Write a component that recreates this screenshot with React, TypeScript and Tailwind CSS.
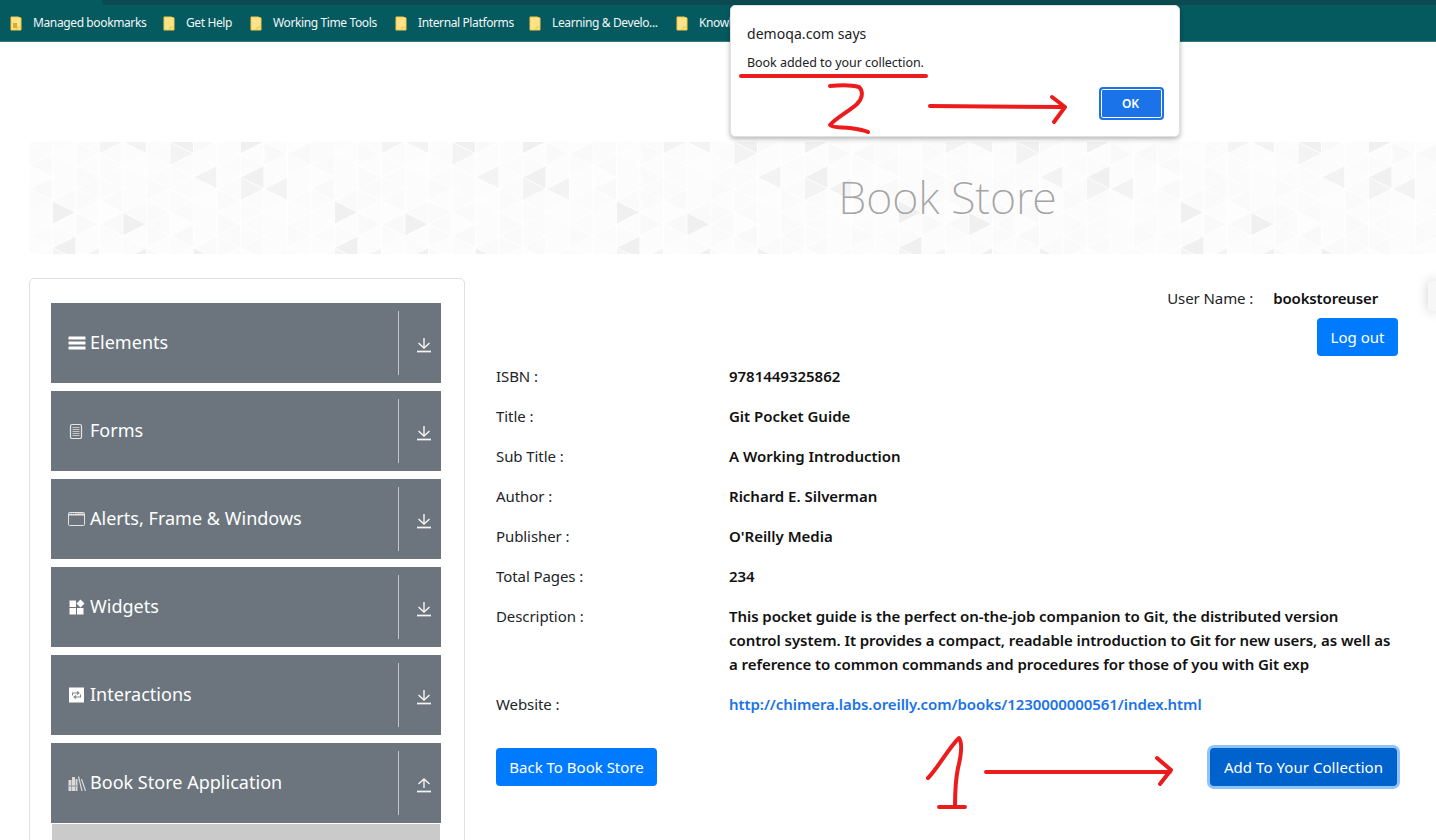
const sans = "font-['Noto_Sans','Open_Sans',sans-serif]";

function Folder({ managed }: { managed?: boolean }) {
  return (
    <svg width="14" height="15" viewBox="0 0 14 15" className="shrink-0">
      <path d="M2 1h7l3 1v12H2z" fill="#ffe38a" stroke="#f5c842" strokeWidth="1" />
      <path d="M8 14v-3h4" fill="none" stroke="#f5c842" strokeWidth="1" />
      {managed && <rect x="4" y="7" width="4" height="5" fill="#d9ae2e" />}
    </svg>
  );
}

function Banner() {
  // triangle lattice of the header background
  const shades = ["#fbfbfb", "#fcfcfc", "#fafafa", "#fcfcfc", "#f3f3f3", "#fbfbfb", "#fafafa", "#fcfcfc", "#fbfbfb", "#fdfdfd", "#fafafa", "#fcfcfc", "#f0f0f0", "#fbfbfb", "#fcfcfc", "#f9f9f9", "#fcfcfc"];
  const tris: { p: string; c: string }[] = [];
  const w = 23.5;
  const h = 23.5;
  for (let col = 0; col < 60; col++) {
    for (let row = -1; row < 6; row++) {
      const x = col * w;
      const y = row * h + (col % 2 ? h / 2 : 0);
      const seed = (col % 12) * 7 + (row + 1) * 13;
      tris.push({ p: `${x},${y} ${x + w},${y + h / 2} ${x},${y + h}`, c: shades[seed % shades.length] });
      tris.push({ p: `${x + w},${y + h / 2} ${x},${y + h} ${x + w},${y + h + h / 2}`, c: shades[(seed * 3 + 5) % shades.length] });
    }
  }
  return (
    <svg className="absolute inset-0 w-full h-full" preserveAspectRatio="none">
      {tris.map((t, i) => (
        <polygon key={i} points={t.p} fill={t.c} stroke="#ffffff" strokeWidth="0.7" />
      ))}
    </svg>
  );
}

function ArrowIcon({ up }: { up?: boolean }) {
  return (
    <svg width="16" height="16" viewBox="0 0 16 16" fill="none" stroke="#f5f5f5" strokeWidth="1.4">
      {up ? <path d="M8 11V2M2.5 7L8 2l5.5 5" /> : <path d="M8 1v10M2.5 6L8 11l5.5-5" />}
      <path d="M1 14.5h14" strokeWidth="1.7" />
    </svg>
  );
}

function MenuIcon({ name }: { name: string }) {
  if (name === "bars")
    return (
      <svg width="18" height="16" viewBox="0 0 18 16" fill="#ffffff">
        <rect x="0.5" y="1.5" width="17" height="3" rx="0.5" />
        <rect x="0.5" y="6.5" width="17" height="3" rx="0.5" />
        <rect x="0.5" y="11.5" width="17" height="3" rx="0.5" />
      </svg>
    );
  if (name === "form")
    return (
      <svg width="18" height="16" viewBox="0 0 18 16" fill="none" stroke="#e4e4e4">
        <rect x="2.5" y="1.5" width="11" height="14" rx="1.5" strokeWidth="1.2" />
        <path d="M4.5 4.5h7M4.5 6.5h7M4.5 8.5h7M4.5 10.5h7M4.5 12.5h7" stroke="#c4c7ca" />
      </svg>
    );
  if (name === "window")
    return (
      <svg width="18" height="16" viewBox="0 0 18 16" fill="none" stroke="#e4e4e4">
        <rect x="0.5" y="1.5" width="16" height="13" rx="1" />
        <path d="M1 3.5h15" strokeWidth="2" />
        <path d="M2 2.5h1M4 2.5h1M6 2.5h1" stroke="#6c757d" />
      </svg>
    );
  if (name === "widgets")
    return (
      <svg width="18" height="16" viewBox="0 0 18 16" fill="#ffffff">
        <rect x="1.5" y="1.5" width="6.5" height="6.5" />
        <path d="M12.5 0.5l4 4-4 4-4-4z" />
        <rect x="1.5" y="9" width="6.5" height="6.5" />
        <rect x="9" y="9" width="6.5" height="6.5" />
      </svg>
    );
  if (name === "swap")
    return (
      <svg width="18" height="16" viewBox="0 0 18 16">
        <rect x="1" y="0.5" width="15" height="15" fill="#ffffff" />
        <path d="M4.5 8.5V6h6M9 4.3l2 1.7-2 1.7M12.5 7.5V10h-6M8 11.7L6 10l2-1.7" fill="none" stroke="#80858b" strokeWidth="1.1" />
      </svg>
    );
  return (
    <svg width="18" height="16" viewBox="0 0 18 16">
      <path d="M0.5 5h3v11h-3zM4 2h3v14H4zM7.5 4h2v12h-2z" fill="#dadada" />
      <path d="M10.5 1.5l3.5 14.5M13.5 4l4 12" stroke="#dadada" strokeWidth="1.2" fill="none" />
      <path d="M1 11h8" stroke="#8a8f95" />
    </svg>
  );
}

const menu = [
  { label: "Elements", icon: "bars" },
  { label: "Forms", icon: "form" },
  { label: "Alerts, Frame & Windows", icon: "window" },
  { label: "Widgets", icon: "widgets" },
  { label: "Interactions", icon: "swap" },
  { label: "Book Store Application", icon: "books", open: true },
];

const details = [
  { label: "ISBN :", value: "9781449325862" },
  { label: "Title :", value: "Git Pocket Guide" },
  { label: "Sub Title :", value: "A Working Introduction" },
  { label: "Author :", value: "Richard E. Silverman" },
  { label: "Publisher :", value: "O'Reilly Media" },
  { label: "Total Pages :", value: "234" },
];

const bookmarks = [
  { label: "Managed bookmarks", managed: true, w: "w-[153px]" },
  { label: "Get Help", w: "w-[87px]" },
  { label: "Working Time Tools", w: "w-[145px]" },
  { label: "Internal Platforms", w: "w-[134px]" },
  { label: "Learning & Develo...", w: "w-[147px]" },
  { label: "Knowledge", w: "w-[100px]" },
];

export default function App() {
  return (
    <div className={`relative w-[1436px] h-[840px] overflow-hidden bg-white text-[#212529] ${sans}`}>
      {/* browser chrome */}
      <div className="h-[42px] bg-[#055a60] border-b border-[#2e7a7f] relative">
        <div className="absolute left-[102px] right-0 top-0 h-[5px] bg-[#0c4a52] rounded-bl-lg" />
        <div className="flex items-center pl-[9px] pt-[15px] text-[12px] leading-4 text-[#f2f7f7]">
          {bookmarks.map((b) => (
            <div key={b.label} className={`flex items-center gap-[10px] shrink-0 whitespace-nowrap tracking-[-0.38px] ${b.w}`}>
              <Folder managed={b.managed} />
              <span>{b.label}</span>
            </div>
          ))}
        </div>
      </div>

      <div className="pl-[29px] pt-[100px]">
        <div className="relative h-[112px] flex items-center justify-center bg-[#fbfbfb] pl-[430px]">
          <Banner />
          <h1 className="relative text-[45px] font-extralight text-[#a4a4a4] leading-none pb-[4px] tracking-[-0.1px]">Book Store</h1>
        </div>

        <div className="flex mt-[24px]">
          <aside className="w-[436px] shrink-0 h-[600px] border border-[#dfdfdf] rounded-[5px] pt-[24px] pl-[21px] pr-[23px]">
            <div className="flex flex-col gap-[8px]">
              {menu.map((m) => (
                <div key={m.label} className="h-[80px] bg-[#6c757d] flex items-center text-white">
                  <div className="flex-1 flex items-center pl-[17px] gap-[4px] pb-[1px]">
                    <MenuIcon name={m.icon} />
                    <span className="text-[18px] leading-6 tracking-[0.02px] relative top-[-1px]">{m.label}</span>
                  </div>
                  <div className="h-[64px] w-px bg-[#c3c6c9]" />
                  <div className="w-[42px] flex justify-center pl-[8px] pt-[3px]">
                    <ArrowIcon up={m.open} />
                  </div>
                </div>
              ))}
            </div>
            <div className="h-[40px] mx-[1px] mt-[1px] bg-[#cacaca]" />
          </aside>

          <main className="flex-1 pl-[31px] pr-[38px] text-[15px] leading-6">
            <div className="flex justify-end pt-[8px] pr-[20px] tracking-[-0.08px]">
              <span>User Name :</span>
              <span className="ml-[20px] font-semibold text-[#111] tracking-[-0.15px]">bookstoreuser</span>
            </div>
            <div className="flex justify-end mt-[8px]">
              <button className="h-[38px] w-[81px] rounded-[4px] bg-[#007bff] text-white">Log out</button>
            </div>
            <div className="mt-[8px] flex flex-col gap-[16px]">
              {details.map((d) => (
                <div key={d.label} className="flex tracking-[-0.08px]">
                  <div className="w-[233px] shrink-0">{d.label}</div>
                  <div className="font-semibold text-[#111] tracking-[-0.02px]">{d.value}</div>
                </div>
              ))}
              <div className="flex tracking-[-0.08px]">
                <div className="w-[233px] shrink-0">Description :</div>
                <div className="font-semibold text-[#111] whitespace-nowrap tracking-[-0.06px]">
                  This pocket guide is the perfect on-the-job companion to Git, the distributed version
                  <br />
                  control system. It provides a compact, readable introduction to Git for new users, as well as
                  <br />
                  a reference to common commands and procedures for those of you with Git exp
                </div>
              </div>
              <div className="flex tracking-[-0.08px]">
                <div className="w-[233px] shrink-0">Website :</div>
                <div className="font-semibold text-[#1a73e8] tracking-[-0.07px]">http://chimera.labs.oreilly.com/books/1230000000561/index.html</div>
              </div>
            </div>
            <div className="flex justify-between mt-[32px] pr-px">
              <button className="h-[38px] w-[161px] rounded-[4px] bg-[#007bff] text-white">Back To Book Store</button>
              <button className="h-[38px] w-[187px] rounded-[4px] bg-[#0062cc] text-white ring-[3px] ring-[#8fc4fb] tracking-[0.05px]">Add To Your Collection</button>
            </div>
          </main>
        </div>
      </div>

      {/* side tab at the page edge */}
      <div className="absolute left-[1428px] top-[281px] w-[12px] h-[30px] bg-[#f7f7f7] shadow-[0_0_12px_rgba(0,0,0,0.18)]" />

      {/* browser alert */}
      <div className="absolute left-[730px] top-[5px] w-[450px] h-[132px] bg-white rounded-[5px] border border-[#dde3e3] shadow-[0_2px_5px_rgba(0,0,0,0.3)]">
        <div className="absolute left-[16px] top-[18px] text-[14px] leading-5 text-[#202124] tracking-[0.05px]">demoqa.com says</div>
        <div className="absolute left-[16px] top-[49px] text-[12.5px] leading-4 text-[#202124] tracking-[-0.05px]">Book added to your collection.</div>
        <button className="absolute left-[368px] top-[81px] w-[65px] h-[33px] pr-[2px] rounded-[4px] bg-[#1a73e8] text-white text-[12px] font-semibold border-2 border-[#1a73e8] ring-1 ring-inset ring-white">OK</button>
      </div>

      {/* red annotations */}
      <svg className="absolute inset-0 pointer-events-none" width="1436" height="840" fill="none" stroke="#ec1c1c" strokeWidth="4" strokeLinecap="round" strokeLinejoin="round">
        <path d="M741 76L926 76" />
        <path d="M830 86C840 85 852 85 859 87C864 92 862 99 857 104C848 112 836 118 830 125C832 128 842 127 850 128C857 129 864 130 868 132" />
        <path d="M930 106L1064 107M1052 97L1065 107L1054 122" />
        <path d="M928 778C938 768 950 746 959 738C963 744 961 756 958 768C955 782 955 795 955 807M939 807L965 807" />
        <path d="M986 772L1170 772M1157 758L1171 770L1160 784" />
      </svg>
    </div>
  );
}
